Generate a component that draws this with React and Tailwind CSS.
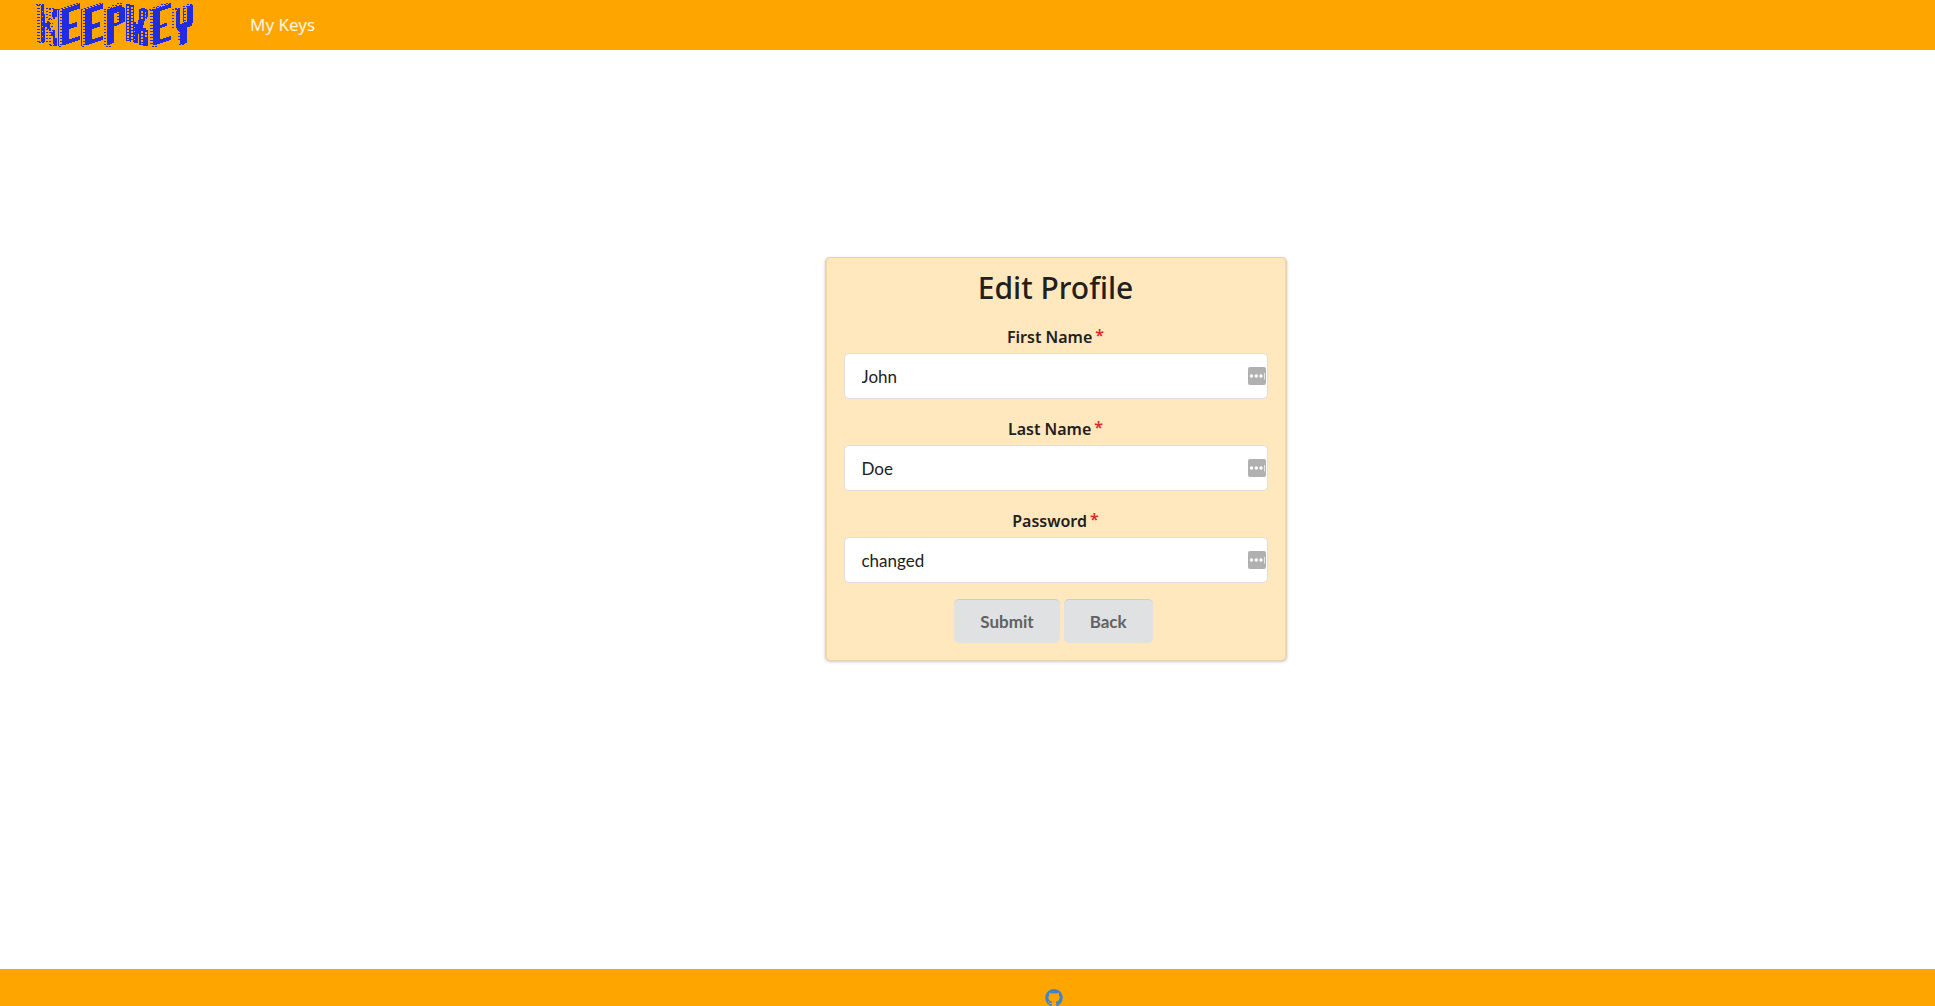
import React from "react";

const fields = [
  { id: "first-name", label: "First Name", value: "John" },
  { id: "last-name", label: "Last Name", value: "Doe" },
  { id: "password", label: "Password", value: "changed" },
];

function BlockE({ x }) {
  return (
    <g transform={`translate(${x} 0)`}>
      <path d="M12 30V27H21V24H30V21H39V18H48V15H57V12H66V27H57V30H48V33H39V36H33V72H42V69H51V66H57V81H48V84H39V87H33V117H42V114H51V111H60V108H66V120H60V123H51V126H42V129H33V132H24V135H12Z" />
      <path d="M0 28.500H9M9 25.500H18M18 22.500H27M27 19.500H36M36 16.500H45M45 13.500H54M54 10.500H66M3 138H12" fill="none" stroke="#212be0" strokeWidth="3" strokeDasharray="6 3" />
      <path d="M1.500 28V138" stroke="#212be0" strokeWidth="3" />
      <path d="M9 33V135" stroke="#212be0" strokeWidth="6" strokeDasharray="3 6" />
    </g>
  );
}

function Logo() {
  return (
    <svg viewBox="105 0 480 150" className="h-[50px] w-40" fill="#212be0" shapeRendering="crispEdges" role="img" aria-label="KeepKey">
      {/* K */}
      <path d="M123 15H132V42H135V126H123Z" />
      <path d="M135 69H141V63H147V66H150V84H153V90H147V87H141V81H135Z" />
      <path d="M159 30H165V27H171V51H165V57H159V51H156V36H159Z" />
      <path d="M153 96H159V90H165V114H171V138H162V132H159V108H153Z" />
      <path d="M115.500 15V129" stroke="#212be0" strokeWidth="7" strokeDasharray="3 6" />
      <path d="M108 13.500H135M147 25.500H162M159 28.500H174M117 127.500H135M150 136.500H171M144 58.500H156M147 70.500H159M144 79.500H159M147 91.500H162" stroke="#212be0" strokeWidth="3" strokeDasharray="6 3" />
      <path d="M150 27V57M150 87V135M139.500 24V60M139.500 87V126" stroke="#212be0" strokeWidth="6" strokeDasharray="3 6" />
      <path d="M126 33V123" stroke="#ffa500" strokeWidth="3" strokeDasharray="3 12" />

      <BlockE x={174} />
      <BlockE x={243} />

      {/* P */}
      <path fillRule="evenodd" d="M321 33V27H330V24H339V21H348V18H357V15H366V21H372V24H375V66H369V69H363V72H357V75H351V78H342V129H336V132H330V135H321ZM342 39V69H351V66H357V36H351V39Z" />
      <path d="M315 33V138M354 39V69" stroke="#212be0" strokeWidth="6" strokeDasharray="3 6" />
      <path d="M312 28.500H324M324 22.500H336M336 16.500H351M351 10.500H369M318 138H336" stroke="#212be0" strokeWidth="3" strokeDasharray="6 3" />

      {/* K with window-like gaps */}
      <path d="M378 12H390V15H402V66H408V72H414V60H417V27H423V24H435V27H441V30H444V51H441V57H435V63H432V75H429V84H438V90H444V138H429V135H417V102H414V129H402V126H390V123H378Z" />
      <path d="M384 18V120M394.500 21V125M424.500 33V57M424.500 93V132M436.500 96V111" stroke="#ffa500" strokeWidth="6" strokeDasharray="6 3" />
      <path d="M435 36V57" stroke="#ffa500" strokeWidth="3" strokeDasharray="6 3" />
      <path d="M403.500 81V126" stroke="#ffa500" strokeWidth="3" strokeDasharray="3 9" />

      {/* E */}
      <path d="M459 30V27H468V24H477V21H486V18H495V15H504V12H513V24H504V27H495V30H486V33H480V75H486V72H492V69H501V78H495V81H486V84H480V117H489V114H498V111H507V108H513V120H507V123H498V126H489V129H480V132H471V135H459Z" />
      <path d="M453 30V138" stroke="#212be0" strokeWidth="9" strokeDasharray="3 6" />
      <path d="M447 28.500H459M459 22.500H471M471 19.500H483M483 13.500H498M498 10.500H513M456 138H474" stroke="#212be0" strokeWidth="3" strokeDasharray="6 3" />

      {/* Y */}
      <path d="M528 33H531V27H540V72H546V69H552V66H561V18H570V15H579V69H576V78H570V81H561V129H555V132H540V96H537V90H531V84H528Z" />
      <path d="M551 24V66" stroke="#212be0" strokeWidth="3" />
      <path d="M519 27V84M555 24V66M537 90V126" stroke="#212be0" strokeWidth="6" strokeDasharray="3 6" />
      <path d="M516 28.500H531M525 25.500H543M549 19.500H564M561 13.500H579M537 133.500H555" stroke="#212be0" strokeWidth="3" strokeDasharray="6 3" />
    </svg>
  );
}

function PasswordManagerIcon() {
  return (
    <svg viewBox="0 0 18 18" className="pointer-events-none absolute top-1/2 right-0.5 size-[18px] -translate-y-1/2" aria-hidden="true">
      <rect width="18" height="18" rx="2" fill="#b0b0b0" />
      <circle cx="3.500" cy="9" r="1.700" fill="#fff" />
      <circle cx="8.300" cy="9" r="1.700" fill="#fff" />
      <circle cx="13" cy="9" r="1.700" fill="#fff" />
      <path d="M16.500 6v6.500" stroke="#e8e8e8" />
    </svg>
  );
}

function Field({ id, label, value }) {
  return (
    <div>
      <label htmlFor={id} className="block text-center font-['Noto_Sans',sans-serif] text-base leading-6 font-semibold text-[#22201c]">
        {label}
        <span className="ml-[3px] inline-block -translate-y-0.5 text-[#db2828]">*</span>
      </label>
      <div className="relative mt-1">
        <input
          id={id}
          type="text"
          defaultValue={value}
          className="block h-[46px] w-full rounded-[5px] border border-[#dededf] bg-white px-[17px] text-[17px] text-[#212121] outline-none"
        />
        <PasswordManagerIcon />
      </div>
    </div>
  );
}

export default function App() {
  return (
    <div className="flex h-screen flex-col overflow-hidden bg-white font-[Lato,sans-serif]">
      <header className="flex h-[50px] shrink-0 items-center bg-[#ffa500] pl-[35px]">
        <a href="#home"><Logo /></a>
        <nav className="ml-[55px]">
          <a href="#keys" className="font-['Noto_Sans',sans-serif] text-[17px] text-[#fff6e5]">My Keys</a>
        </nav>
      </header>

      <main className="flex grow justify-center pt-[207px] pl-44">
        <form
          className="w-[462px] self-start rounded-[5px] border border-[#e9d3ad] bg-[#ffe8be] px-[18px] pt-3 pb-[17px] shadow-[0_1px_3px_rgba(34,36,38,0.25),inset_1px_0_#eed8b1,inset_-1px_0_#eed8b1]"
          onSubmit={(e) => e.preventDefault()}
        >
          <h1 className="text-center font-['Noto_Sans',sans-serif] text-3xl leading-9 font-medium text-[#22201c]">Edit Profile</h1>
          <div className="mt-[19px] flex flex-col gap-[18px]">
            {fields.map((field) => <Field key={field.id} {...field} />)}
          </div>
          <div className="mt-4 mr-1 flex justify-center gap-1">
            <button type="submit" className="h-11 rounded-[5px] border-t border-[#cccdcf] bg-[#e0e1e2] px-[26px] text-[17px] leading-none font-bold text-[#606162]">Submit</button>
            <button type="button" className="h-11 rounded-[5px] border-t border-[#cccdcf] bg-[#e0e1e2] px-[26px] text-[17px] leading-none font-bold text-[#606162]">Back</button>
          </div>
        </form>
      </main>

      <footer className="flex h-[37px] shrink-0 items-start justify-center overflow-hidden bg-[#ffa500] pt-5 pl-[173px]">
        <a href="#github" aria-label="GitHub" className="text-[#4183c4]">
          <svg viewBox="0 0 496 512" className="size-[18px]" fill="currentColor" aria-hidden="true">
            <path d="M248 0C111 0 0 111 0 248c0 110 71 203 170 236 12 2 17-5 17-12v-43c-69 15-84-29-84-29-11-29-28-37-28-37-22-15 2-15 2-15 25 2 38 26 38 26 22 38 58 27 73 20 2-16 9-27 16-33-55-6-113-28-113-123 0-27 10-49 26-67-3-6-11-31 2-65 0 0 21-7 68 25a238 238 0 0 1 124 0c47-32 68-25 68-25 13 34 5 59 2 65 16 18 26 40 26 67 0 95-58 117-113 123 9 8 17 23 17 46v68c0 7 5 14 17 12 99-33 170-126 170-236C496 111 385 0 248 0Z" />
          </svg>
        </a>
      </footer>
    </div>
  );
}
